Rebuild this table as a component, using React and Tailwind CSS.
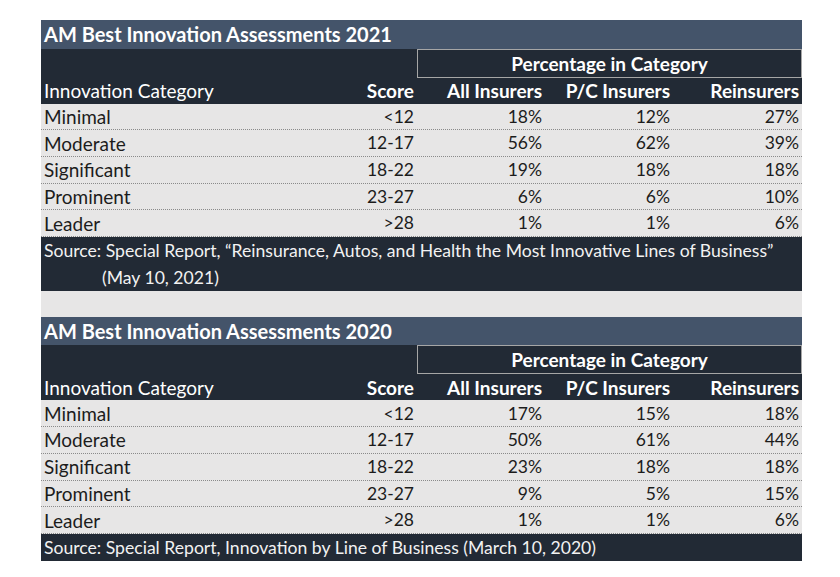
const tables = [
  {
    year: '2021',
    rows: [
      ['Minimal', '<12', '18%', '12%', '27%'],
      ['Moderate', '12-17', '56%', '62%', '39%'],
      ['Significant', '18-22', '19%', '18%', '18%'],
      ['Prominent', '23-27', '6%', '6%', '10%'],
      ['Leader', '>28', '1%', '1%', '6%'],
    ],
    source: [
      'Source: Special Report, \u201cReinsurance, Autos, and Health the Most Innovative Lines of Business\u201d',
      '(May 10, 2021)',
    ],
  },
  {
    year: '2020',
    rows: [
      ['Minimal', '<12', '17%', '15%', '18%'],
      ['Moderate', '12-17', '50%', '61%', '44%'],
      ['Significant', '18-22', '23%', '18%', '18%'],
      ['Prominent', '23-27', '9%', '5%', '15%'],
      ['Leader', '>28', '1%', '1%', '6%'],
    ],
    source: ['Source: Special Report, Innovation by Line of Business (March 10, 2020)'],
  },
]

const cols = 'grid grid-cols-[249px_127px_128px_128px_129px]'

function Table({ data }) {
  return (
    <div>
      <div className="h-[28.5px] bg-[#44546a] px-[3px] flex items-center text-white font-bold text-[20px]">
        AM Best Innovation Assessments {data.year}
      </div>
      <div className={`${cols} h-[29px] bg-[#222a35]`}>
        <div className="col-span-2" />
        <div className="col-span-3 border border-[#a6a6a6] flex items-center justify-center text-white font-bold text-[19px]">
          Percentage in Category
        </div>
      </div>
      <div className={`${cols} h-[26px] bg-[#222a35] text-white items-center text-[19px]`}>
        <div className="px-[3px]">Innovation Category</div>
        <div className="px-[3px] text-right font-bold">Score</div>
        <div className="px-[3px] text-right font-bold">All Insurers</div>
        <div className="px-[3px] text-right font-bold">P/C Insurers</div>
        <div className="px-[3px] text-right font-bold">Reinsurers</div>
      </div>
      {data.rows.map((r) => (
        <div
          key={r[0]}
          className={`${cols} h-[26.7px] bg-[#e7e6e6] text-[#1c1c1c] items-center border-b border-dotted border-[#8a8a8a]`}
        >
          <div className="px-[3px] text-[19px]">{r[0]}</div>
          {r.slice(1).map((v, i) => (
            <div key={i} className="px-[3px] text-right">
              {v}
            </div>
          ))}
        </div>
      ))}
      <div className="bg-[#222a35] text-[#f2f2f2] text-[17.6px]">
        {data.source.map((line, i) => (
          <div key={i} className={`h-[27px] flex items-center ${i > 0 ? 'pl-[61px]' : 'px-[3px]'}`}>
            {line}
          </div>
        ))}
      </div>
    </div>
  )
}

export default function App() {
  return (
    <div className="w-[840px] h-[577px] bg-white pt-[20px] pl-[41px] font-['Lato',sans-serif] text-[17.5px] leading-none">
      <div className="w-[761px]">
        <Table data={tables[0]} />
        <div className="h-[26px] bg-[#e7e6e6]" />
        <Table data={tables[1]} />
      </div>
    </div>
  )
}
